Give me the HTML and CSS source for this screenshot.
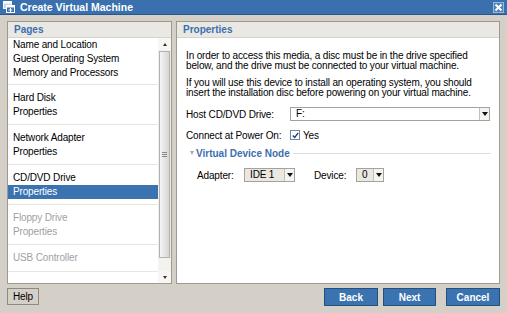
FILE: index.html
```html
<!DOCTYPE html>
<html>
<head>
<meta charset="utf-8">
<link rel="stylesheet" href="styles.css">
</head>
<body>
<div class="window">
  <div class="titlebar">
    <svg class="app-icon" width="12" height="12" viewBox="0 0 12 12">
      <rect x="0.5" y="0.5" width="8" height="7" fill="#c9d9ec" stroke="#ffffff"/>
      <rect x="0.5" y="0.5" width="8" height="2" fill="#ffffff"/>
      <rect x="3.5" y="4.5" width="8" height="7" fill="#3a70ad" stroke="#ffffff"/>
      <rect x="3.5" y="4.5" width="8" height="2" fill="#ffffff"/>
      <line x1="5.5" y1="9" x2="9.5" y2="9" stroke="#ffffff"/>
      <line x1="7.5" y1="7" x2="7.5" y2="11" stroke="#ffffff"/>
    </svg>
    <span class="title">Create Virtual Machine</span>
    <span class="close">
      <svg width="9" height="9" viewBox="0 0 9 9">
        <path d="M1.5 1.5 L7.5 7.5 M7.5 1.5 L1.5 7.5" stroke="#ffffff" stroke-width="2"/>
      </svg>
    </span>
  </div>

  <div class="main">
    <div class="panel left">
      <div class="panel-head">Pages</div>
      <div class="list-wrap">
        <div class="list">
          <div class="group first">
            <div class="item">Name and Location</div>
            <div class="item">Guest Operating System</div>
            <div class="item">Memory and Processors</div>
          </div>
          <div class="group">
            <div class="item">Hard Disk</div>
            <div class="item">Properties</div>
          </div>
          <div class="group">
            <div class="item">Network Adapter</div>
            <div class="item">Properties</div>
          </div>
          <div class="group">
            <div class="item">CD/DVD Drive</div>
            <div class="item selected">Properties</div>
          </div>
          <div class="group disabled">
            <div class="item">Floppy Drive</div>
            <div class="item">Properties</div>
          </div>
          <div class="group disabled single">
            <div class="item">USB Controller</div>
          </div>
          <div class="group tail"></div>
        </div>
        <div class="scrollbar">
          <div class="sb-btn"><span class="tri-up"></span></div>
          <div class="sb-thumb"><span class="grip"></span></div>
          <div class="sb-track"></div>
          <div class="sb-btn"><span class="tri-down"></span></div>
        </div>
      </div>
    </div>

    <div class="panel right">
      <div class="panel-head">Properties</div>
      <div class="content">
        <p class="para">In order to access this media, a disc must be in the drive specified<br>below, and the drive must be connected to your virtual machine.</p>
        <p class="para second">If you will use this device to install an operating system, you should<br>insert the installation disc before powering on your virtual machine.</p>
        <div class="row">
          <span class="label">Host CD/DVD Drive:</span>
          <div class="select wide"><span class="sel-text">F:</span><span class="sel-arrow"><span class="tri-down dark"></span></span></div>
        </div>
        <div class="row check-row">
          <span class="label">Connect at Power On:</span>
          <span class="checkbox">
            <svg width="7" height="7" viewBox="0 0 7 7"><path d="M0.8 3.4 L2.7 5.4 L6.2 0.9" fill="none" stroke="#1d3e6e" stroke-width="1.4"/></svg>
          </span>
          <span class="yes">Yes</span>
        </div>
        <div class="section">
          <span class="sec-tri"></span>
          <span class="sec-title">Virtual Device Node</span>
          <span class="sec-line"></span>
        </div>
        <div class="node-row">
          <span class="small-label">Adapter:</span>
          <div class="select gray adapter"><span class="sel-text">IDE 1</span><span class="sel-arrow"><span class="tri-down dark"></span></span></div>
          <span class="small-label device-label">Device:</span>
          <div class="select gray device"><span class="sel-text">0</span><span class="sel-arrow"><span class="tri-down dark"></span></span></div>
        </div>
      </div>
    </div>
  </div>

  <div class="footer">
    <button class="btn help">Help</button>
    <div class="spacer"></div>
    <button class="btn blue back">Back</button>
    <button class="btn blue next">Next</button>
    <button class="btn blue cancel">Cancel</button>
  </div>
</div>
</body>
</html>
```

FILE: styles.css
```css
* { box-sizing: border-box; }
html, body { margin: 0; padding: 0; }
body {
  width: 507px;
  height: 313px;
  overflow: hidden;
  font-family: "Liberation Sans", Arial, sans-serif;
  font-size: 10px;
  letter-spacing: -0.15px;
  color: #000;
  background: #d4d0c8;
}
.window {
  width: 507px;
  height: 313px;
  display: flex;
  flex-direction: column;
  background: #d4d0c8;
}
.titlebar {
  height: 15px;
  flex-shrink: 0;
  background: #3a70ad;
  border-bottom: 1px solid #2a568a;
  display: flex;
  align-items: center;
  padding-left: 3px;
  padding-right: 3px;
  color: #fff;
}
.app-icon { display: block; margin-right: 5px; }
.title { font-weight: bold; font-size: 10.5px; letter-spacing: 0; flex: 1; }
.close {
  width: 11px;
  height: 11px;
  border: 1px solid #9ab8dc;
  background: #4a80bd;
  display: flex;
  align-items: center;
  justify-content: center;
}
.close svg { display: block; }

.main {
  display: flex;
  gap: 4px;
  padding: 6px 7px 0 7px;
  height: 269px;
  flex-shrink: 0;
}
.panel {
  border: 1px solid #9d9a93;
  background: #fff;
  display: flex;
  flex-direction: column;
  min-width: 0;
}
.panel.left { width: 165px; flex-shrink: 0; }
.panel.right { flex: 1; }
.panel-head {
  height: 16px;
  flex-shrink: 0;
  background: #eae8e2;
  border-bottom: 1px solid #d6d3cc;
  color: #3b6fb0;
  font-weight: bold;
  letter-spacing: 0;
  padding-left: 6px;
  line-height: 15px;
  font-size: 10px;
}
.list-wrap {
  flex: 1;
  display: flex;
  min-height: 0;
}
.list { flex: 1; overflow: hidden; }
.group {
  border-top: 1px solid #e8e6e1;
  padding: 6px 0 5px;
}
.group.first { border-top: none; padding-top: 0; padding-bottom: 4px; }
.group.single { padding-bottom: 6px; }
.group.tail { padding: 0; height: 10px; }
.item {
  height: 14px;
  line-height: 14px;
  padding-left: 5px;
  white-space: nowrap;
}
.item.selected { background: #3b73b1; color: #fff; }
.group.disabled .item { color: #9f9f9f; }

.scrollbar {
  width: 13px;
  flex-shrink: 0;
  background: #efeeea;
  display: flex;
  flex-direction: column;
}
.sb-btn {
  height: 12px;
  display: flex;
  align-items: center;
  justify-content: center;
  background: #f7f6f3;
}
.sb-thumb {
  height: 207px;
  margin: 1px 1px 0 1px;
  border: 1px solid #b4b2ac;
  background: linear-gradient(to right, #f4f4f4, #d6d6d6);
  display: flex;
  align-items: center;
  justify-content: center;
}
.sb-track { flex: 1; background: #f3f2ee; }
.grip {
  width: 5px;
  height: 5px;
  border-top: 1px solid #888;
  border-bottom: 1px solid #888;
  position: relative;
}
.grip::after {
  content: "";
  position: absolute;
  left: 0; right: 0; top: 1px;
  border-top: 1px solid #888;
}
.tri-up {
  width: 0; height: 0;
  border-left: 2.5px solid transparent;
  border-right: 2.5px solid transparent;
  border-bottom: 3px solid #333;
}
.tri-down {
  width: 0; height: 0;
  border-left: 2.5px solid transparent;
  border-right: 2.5px solid transparent;
  border-top: 3px solid #333;
}
.tri-down.dark { border-top-color: #111; border-left-width: 3px; border-right-width: 3px; border-top-width: 4px; }

.content { padding: 13px 8px 0 9px; }
.para { margin: 0 0 7px; line-height: 10px; white-space: nowrap; color: #000; }
.para.second { margin-bottom: 9px; }
.row {
  display: flex;
  align-items: center;
  height: 14px;
  margin-bottom: 7px;
  white-space: nowrap;
}
.check-row { margin-bottom: 4px; }
.label { width: 104px; flex-shrink: 0; }
.select {
  height: 14px;
  border: 1px solid #a4a29c;
  background: #fff;
  display: flex;
  align-items: stretch;
  flex-shrink: 0;
}
.select.wide { width: 200px; }
.sel-text { flex: 1; padding-left: 5px; line-height: 12px; }
.sel-arrow {
  width: 10px;
  border-left: 1px solid #c2c0ba;
  background: #f4f3ef;
  display: flex;
  align-items: center;
  justify-content: center;
}
.checkbox {
  width: 10px;
  height: 10px;
  border: 1px solid #6f87a6;
  background: #fff;
  display: flex;
  align-items: center;
  justify-content: center;
  margin-right: 3px;
}
.checkbox svg { display: block; }
.section {
  display: flex;
  align-items: center;
  height: 14px;
  padding-left: 4px;
}
.sec-tri {
  width: 0; height: 0;
  border-left: 2.5px solid transparent;
  border-right: 2.5px solid transparent;
  border-top: 4px solid #a8a8a8;
  margin-right: 2px;
}
.sec-title { color: #3b6fb0; font-weight: bold; letter-spacing: 0; margin-right: 3px; }
.sec-line { flex: 1; height: 1px; background: #e0ded9; margin-right: 0; }
.node-row {
  display: flex;
  align-items: center;
  height: 14px;
  margin-top: 8px;
  padding-left: 11px;
  white-space: nowrap;
}
.small-label { width: 47px; flex-shrink: 0; }
.device-label { margin-left: 19px; width: 42px; }
.select.gray { background: #ebe8e1; }
.select.gray .sel-arrow { background: #f5f4f1; }
.select.adapter { width: 51px; }
.select.device { width: 28px; }

.footer {
  display: flex;
  align-items: flex-start;
  padding: 4px 7px 0 7px;
}
.spacer { flex: 1; }
.btn {
  font-family: "Liberation Sans", Arial, sans-serif;
  font-size: 10px;
  height: 18px;
  padding: 0;
  margin: 0;
}
.btn.help {
  width: 32px;
  height: 17px;
  background: #d4d0c8;
  border: 1px solid #8c8a84;
  color: #000;
  letter-spacing: -0.15px;
}
.btn.blue {
  background: #3b73b1;
  border: 1px solid #24507f;
  color: #fff;
  font-weight: bold;
  width: 54px;
}
.btn.back { margin-right: 5px; }
.btn.next { width: 53px; margin-right: 10px; }
```
